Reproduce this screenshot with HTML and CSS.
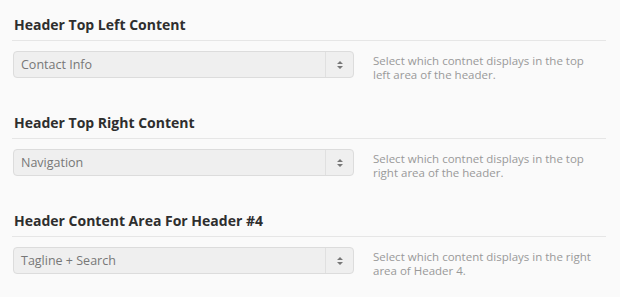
FILE: index.html
```html
<!DOCTYPE html>
<html lang="en">
<head>
  <meta charset="UTF-8" />
  <title>Header Options</title>
  <link rel="stylesheet" href="styles.css">
</head>
<body>
  <div class="options">

    <div class="option">
      <h3>Header Top Left Content</h3>
      <div class="row">
        <div class="select">
          <span class="value">Contact Info</span>
          <span class="arrows">
            <svg width="8" height="10" viewBox="0 0 8 10"><path d="M4 1L7 4H1Z M4 9L7 6H1Z" fill="#777"/></svg>
          </span>
        </div>
        <p class="desc">Select which contnet displays in the top left area of the header.</p>
      </div>
    </div>

    <div class="option">
      <h3>Header Top Right Content</h3>
      <div class="row">
        <div class="select">
          <span class="value">Navigation</span>
          <span class="arrows">
            <svg width="8" height="10" viewBox="0 0 8 10"><path d="M4 1L7 4H1Z M4 9L7 6H1Z" fill="#777"/></svg>
          </span>
        </div>
        <p class="desc">Select which contnet displays in the top right area of the header.</p>
      </div>
    </div>

    <div class="option">
      <h3>Header Content Area For Header #4</h3>
      <div class="row">
        <div class="select">
          <span class="value">Tagline + Search</span>
          <span class="arrows">
            <svg width="8" height="10" viewBox="0 0 8 10"><path d="M4 1L7 4H1Z M4 9L7 6H1Z" fill="#777"/></svg>
          </span>
        </div>
        <p class="desc">Select which content displays in the right area of Header 4.</p>
      </div>
    </div>

  </div>
</body>
</html>
```

FILE: styles.css
```css
html, body {
  margin: 0;
  padding: 0;
}

body {
  background: #fafafa;
  font-family: 'Open Sans', 'Liberation Sans', sans-serif;
  color: #333;
}

.options {
  width: 594px;
  padding-left: 12px;
}

.option {
  padding-top: 16px;
  height: 82px;
}

.option h3 {
  margin: 0;
  font-size: 14px;
  font-weight: 700;
  line-height: 18px;
  padding: 0 0 6px 2px;
  color: #2e2e2e;
  border-bottom: 1px solid #e6e6e6;
}

.row {
  display: flex;
  align-items: flex-start;
  margin-top: 10px;
}

.select {
  display: flex;
  width: 339px;
  height: 25px;
  margin-left: 1px;
  background: #efefef;
  border: 1px solid #dcdcdc;
  border-radius: 4px;
}

.value {
  flex: 1;
  padding-left: 7px;
  font-size: 12.5px;
  line-height: 25px;
  color: #777;
}

.arrows {
  width: 27px;
  border-left: 1px solid #e0e0e0;
  display: flex;
  align-items: center;
  justify-content: center;
}

.desc {
  margin: 3px 0 0 19px;
  width: 226px;
  font-size: 11.5px;
  line-height: 14px;
  color: #999;
}
```
